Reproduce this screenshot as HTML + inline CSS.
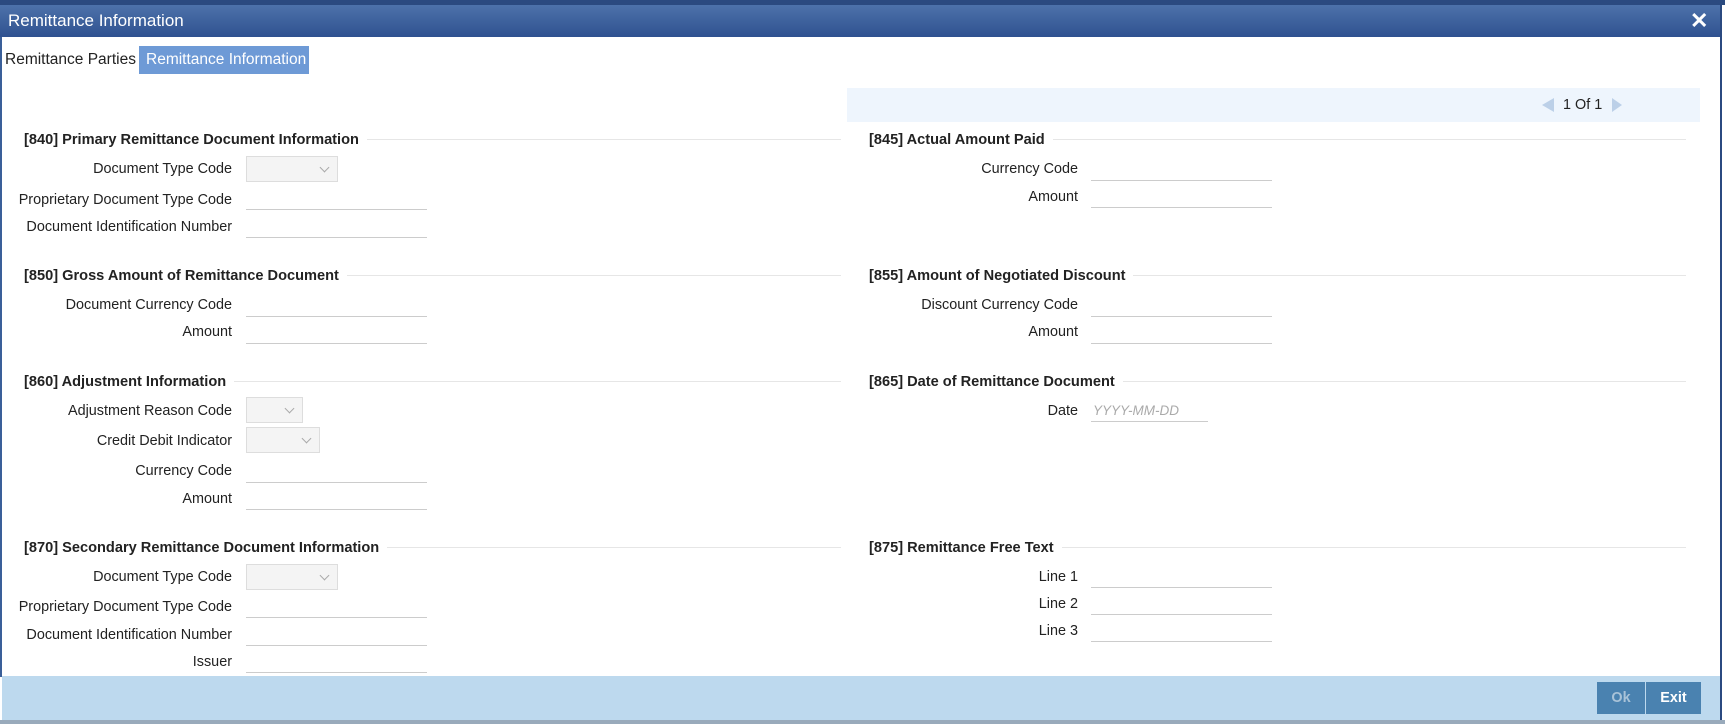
<!DOCTYPE html>
<html><head><meta charset="utf-8"><style>
*{margin:0;padding:0;box-sizing:border-box}
body{width:1725px;height:724px;overflow:hidden;background:#fff;font-family:"Liberation Sans",Arial,sans-serif;font-size:14.4px;color:#222;position:relative}
.a{position:absolute}
#top{left:0;top:0;width:1725px;height:5px;background:#2b4a80}
#title{left:0;top:5px;width:1722px;height:32px;background:linear-gradient(#4d72aa,#2f5190);color:#fff;font-size:17px;padding:6px 0 0 8px}
#lb{left:0;top:37px;width:2px;height:640px;background:#3a5f99}
#rb{left:1720px;top:0;width:2px;height:724px;background:#2b4a80}
.lab{position:absolute;text-align:right;white-space:nowrap}
.hd{position:absolute;font-weight:bold;white-space:nowrap;background:#fff;padding-right:8px;font-size:14.6px}
.ln{position:absolute;height:1px;background:#e6e6e6}
.in{position:absolute;height:1px;background:#ccc;width:181px}
.sel{position:absolute;height:26px;border:1px solid #ddd;background:#f4f4f4}
.sel:after{content:"";position:absolute;right:9px;top:7px;width:6px;height:6px;border-right:1.5px solid #aaa;border-bottom:1.5px solid #aaa;transform:rotate(45deg)}
</style></head><body>
<div class="a" id="top"></div>
<div class="a" id="title">Remittance Information<span style="position:absolute;left:1690px;top:3px;font-size:22px;font-weight:bold">✕</span></div>
<div class="a" id="lb"></div><div class="a" id="rb"></div>
<div class="a" style="left:5px;top:51px;font-size:15.5px;white-space:nowrap">Remittance Parties</div>
<div class="a" style="left:139px;top:46px;width:170px;height:28px;background:#6e9ad6;color:#fff;font-size:15.5px;padding:5px 0 0 7px;white-space:nowrap">Remittance Information</div>
<div class="a" style="left:847px;top:88px;width:853px;height:34px;background:#eef5fd"></div>
<div class="a" style="left:1542px;top:98px;width:0;height:0;border-top:7px solid transparent;border-bottom:7px solid transparent;border-right:12px solid #bcd0e8"></div>
<div class="a" style="left:1563px;top:97px;font-size:14.4px">1 Of 1</div>
<div class="a" style="left:1612px;top:98px;width:0;height:0;border-top:7px solid transparent;border-bottom:7px solid transparent;border-left:10px solid #bcd0e8"></div>

<!-- left -->
<div class="ln" style="left:24px;top:139px;width:817px"></div><div class="hd" style="left:24px;top:132px">[840] Primary Remittance Document Information</div>
<div class="lab" style="right:1493px;top:161px">Document Type Code</div><div class="sel" style="left:246px;top:156px;width:92px"></div>
<div class="lab" style="right:1493px;top:192px">Proprietary Document Type Code</div><div class="in" style="left:246px;top:209px"></div>
<div class="lab" style="right:1493px;top:219px">Document Identification Number</div><div class="in" style="left:246px;top:237px"></div>

<div class="ln" style="left:24px;top:275px;width:817px"></div><div class="hd" style="left:24px;top:268px">[850] Gross Amount of Remittance Document</div>
<div class="lab" style="right:1493px;top:297px">Document Currency Code</div><div class="in" style="left:246px;top:316px"></div>
<div class="lab" style="right:1493px;top:324px">Amount</div><div class="in" style="left:246px;top:343px"></div>

<div class="ln" style="left:24px;top:381px;width:817px"></div><div class="hd" style="left:24px;top:374px">[860] Adjustment Information</div>
<div class="lab" style="right:1493px;top:403px">Adjustment Reason Code</div><div class="sel" style="left:246px;top:397px;width:57px"></div>
<div class="lab" style="right:1493px;top:433px">Credit Debit Indicator</div><div class="sel" style="left:246px;top:427px;width:74px"></div>
<div class="lab" style="right:1493px;top:463px">Currency Code</div><div class="in" style="left:246px;top:482px"></div>
<div class="lab" style="right:1493px;top:491px">Amount</div><div class="in" style="left:246px;top:509px"></div>

<div class="ln" style="left:24px;top:547px;width:817px"></div><div class="hd" style="left:24px;top:540px">[870] Secondary Remittance Document Information</div>
<div class="lab" style="right:1493px;top:569px">Document Type Code</div><div class="sel" style="left:246px;top:564px;width:92px"></div>
<div class="lab" style="right:1493px;top:599px">Proprietary Document Type Code</div><div class="in" style="left:246px;top:617px"></div>
<div class="lab" style="right:1493px;top:627px">Document Identification Number</div><div class="in" style="left:246px;top:645px"></div>
<div class="lab" style="right:1493px;top:654px">Issuer</div><div class="in" style="left:246px;top:672px"></div>

<!-- right -->
<div class="ln" style="left:869px;top:139px;width:817px"></div><div class="hd" style="left:869px;top:132px">[845] Actual Amount Paid</div>
<div class="lab" style="right:647px;top:161px">Currency Code</div><div class="in" style="left:1091px;top:180px"></div>
<div class="lab" style="right:647px;top:189px">Amount</div><div class="in" style="left:1091px;top:207px"></div>

<div class="ln" style="left:869px;top:275px;width:817px"></div><div class="hd" style="left:869px;top:268px">[855] Amount of Negotiated Discount</div>
<div class="lab" style="right:647px;top:297px">Discount Currency Code</div><div class="in" style="left:1091px;top:316px"></div>
<div class="lab" style="right:647px;top:324px">Amount</div><div class="in" style="left:1091px;top:343px"></div>

<div class="ln" style="left:869px;top:381px;width:817px"></div><div class="hd" style="left:869px;top:374px">[865] Date of Remittance Document</div>
<div class="lab" style="right:647px;top:403px">Date</div><div class="a" style="left:1093px;top:403px;font-style:italic;color:#aaa;font-size:13.5px">YYYY-MM-DD</div><div class="in" style="left:1091px;top:421px;width:117px"></div>

<div class="ln" style="left:869px;top:547px;width:817px"></div><div class="hd" style="left:869px;top:540px">[875] Remittance Free Text</div>
<div class="lab" style="right:647px;top:569px">Line 1</div><div class="in" style="left:1091px;top:587px"></div>
<div class="lab" style="right:647px;top:596px">Line 2</div><div class="in" style="left:1091px;top:614px"></div>
<div class="lab" style="right:647px;top:623px">Line 3</div><div class="in" style="left:1091px;top:641px"></div>

<div class="a" style="left:2px;top:676px;width:1718px;height:44px;background:#bdd9ee"></div>
<div class="a" style="left:0;top:720px;width:1725px;height:4px;background:#9ab"></div>
<div class="a" style="left:1597px;top:682px;width:48px;height:32px;background:#4a82b0;color:#a9c3d8;font-weight:bold;text-align:center;line-height:32px">Ok</div>
<div class="a" style="left:1646px;top:682px;width:55px;height:32px;background:#4a82b0;color:#fff;font-weight:bold;text-align:center;line-height:32px">Exit</div>
</body></html>
